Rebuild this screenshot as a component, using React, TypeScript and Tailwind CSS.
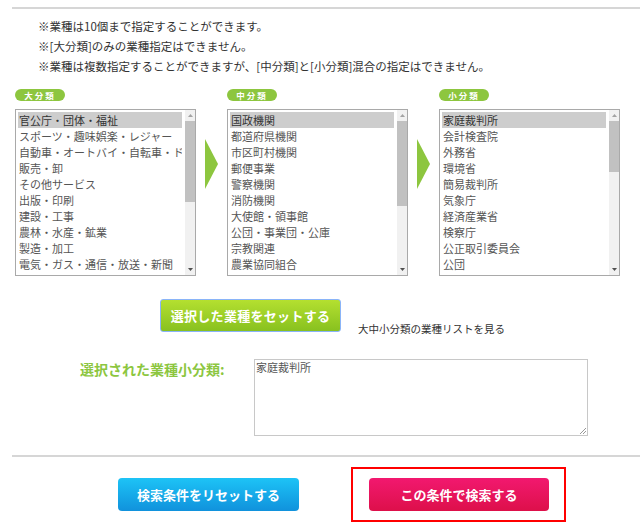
import React from "react";

const large = [
  "官公庁・団体・福祉",
  "スポーツ・趣味娯楽・レジャー",
  "自動車・オートバイ・自転車・ドラ",
  "販売・卸",
  "その他サービス",
  "出版・印刷",
  "建設・工事",
  "農林・水産・鉱業",
  "製造・加工",
  "電気・ガス・通信・放送・新聞",
];

const middle = [
  "国政機関",
  "都道府県機関",
  "市区町村機関",
  "郵便事業",
  "警察機関",
  "消防機関",
  "大使館・領事館",
  "公団・事業団・公庫",
  "宗教関連",
  "農業協同組合",
];

const small = [
  "家庭裁判所",
  "会計検査院",
  "外務省",
  "環境省",
  "簡易裁判所",
  "気象庁",
  "経済産業省",
  "検察庁",
  "公正取引委員会",
  "公団",
];

export default function App() {
  return (
    <div className="w-[640px] h-[532px] overflow-hidden bg-white font-['Noto_Sans_CJK_JP','Noto_Sans',sans-serif]">
      <div className="ml-[12px] mt-[7px] h-[2px] bg-[#d6d6d6]" />

      {/* Notes */}
      <div className="pl-[38px] pt-[7px] text-[11.5px] leading-[20px] text-[#333]">
        <p>※業種は10個まで指定することができます。</p>
        <p>※[大分類]のみの業種指定はできません。</p>
        <p>※業種は複数指定することができますが、[中分類]と[小分類]混合の指定はできません。</p>
      </div>

      {/* Pills */}
      <div className="flex pl-[15px] mt-[13px]">
        <Pill label="大分類" />
        <div className="w-[162px]" />
        <Pill label="中分類" />
        <div className="w-[162px]" />
        <Pill label="小分類" />
      </div>

      {/* Lists */}
      <div className="flex pl-[15px] mt-[8px]">
        <ListBox items={large} thumb="h-[81px]" />
        <Arrow />
        <ListBox items={middle} thumb="h-[85px]" />
        <Arrow />
        <ListBox items={small} thumb="h-[51px]" />
      </div>

      {/* Set button */}
      <div className="flex items-start mt-[23px] pl-[160px]">
        <button className="w-[181px] h-[33px] rounded-[3px] border border-[#8ab4f8] bg-gradient-to-b from-[#b4e030] to-[#88c11f] text-white text-[13px] font-bold tracking-[0.3px]">
          選択した業種をセットする
        </button>
        <span className="ml-[17px] mt-[22px] text-[10.5px] leading-[16px] text-[#333]">
          大中小分類の業種リストを見る
        </span>
      </div>

      {/* Selected */}
      <div className="flex items-start mt-[22px] pl-[80px]">
        <span className="w-[174px] text-[14px] leading-[20px] font-bold text-[#8cc63f]">
          選択された業種小分類:
        </span>
        <div className="relative w-[334px] h-[77px] border border-[#c8c8c8] px-[1px] text-[11px] leading-[14px] text-[#555]">
          家庭裁判所
          <svg
            className="absolute right-[1px] bottom-[1px]"
            width="7"
            height="7"
            viewBox="0 0 7 7"
          >
            <path d="M7 1 L1 7 M7 4 L4 7" stroke="#999" strokeWidth="1" />
          </svg>
        </div>
      </div>

      <div className="ml-[12px] mt-[19px] h-[2px] bg-[#d6d6d6]" />

      {/* Bottom buttons */}
      <div className="flex items-start mt-[10px]">
        <button className="ml-[118px] mt-[11px] w-[181px] h-[33px] rounded-[4px] bg-gradient-to-b from-[#1ec3f6] to-[#1192dc] text-white text-[13px] font-bold">
          検索条件をリセットする
        </button>
        <div className="ml-[52px] w-[215px] h-[55px] border-2 border-[#ff0000] pl-[16px] pt-[9px]">
          <button className="w-[180px] h-[33px] rounded-[4px] bg-gradient-to-b from-[#f2186f] to-[#dd0f4a] text-white text-[13px] font-bold">
            この条件で検索する
          </button>
        </div>
      </div>
    </div>
  );
}

const Pill = ({ label }: { label: string }) => (
  <div className="w-[50px] h-[12px] rounded-full bg-[#8dc63f] flex items-center justify-center text-white text-[8.5px] font-bold tracking-[2px] leading-none">
    {label}
  </div>
);

const Arrow = () => (
  <div className="w-[31px] flex justify-center pt-[30px]">
    <svg width="13" height="50" viewBox="0 0 13 50">
      <polygon points="0,0 13,25 0,50" fill="#8dc63f" />
    </svg>
  </div>
);

interface ListBoxProps {
  items: string[];
  thumb: string;
}

const ListBox: React.FC<ListBoxProps> = ({ items, thumb }) => {
  return (
    <div className="w-[181px] h-[167px] border border-[#a9a9a9] flex">
      <div className="flex-1 pt-[2px] pl-[2px] pr-[3px] overflow-hidden">
        {items.map((item, i) => (
          <div
            key={item}
            className={`h-[16px] leading-[16px] px-[1px] whitespace-nowrap overflow-hidden text-[11px] ${
              i === 0 ? "bg-[#cdcdcd] text-[#333]" : "text-[#555]"
            }`}
          >
            {item}
          </div>
        ))}
      </div>
      <div className="w-[10px] bg-[#f1f1f1] flex flex-col">
        <div className="h-[11px] flex items-center justify-center">
          <svg width="5" height="3" viewBox="0 0 5 3">
            <polygon points="0,3 2.5,0 5,3" fill="#a3a3a3" />
          </svg>
        </div>
        <div className="flex-1">
          <div className={`${thumb} bg-[#c1c1c1]`} />
        </div>
        <div className="h-[11px] flex items-center justify-center">
          <svg width="5" height="3" viewBox="0 0 5 3">
            <polygon points="0,0 5,0 2.5,3" fill="#505050" />
          </svg>
        </div>
      </div>
    </div>
  );
};
